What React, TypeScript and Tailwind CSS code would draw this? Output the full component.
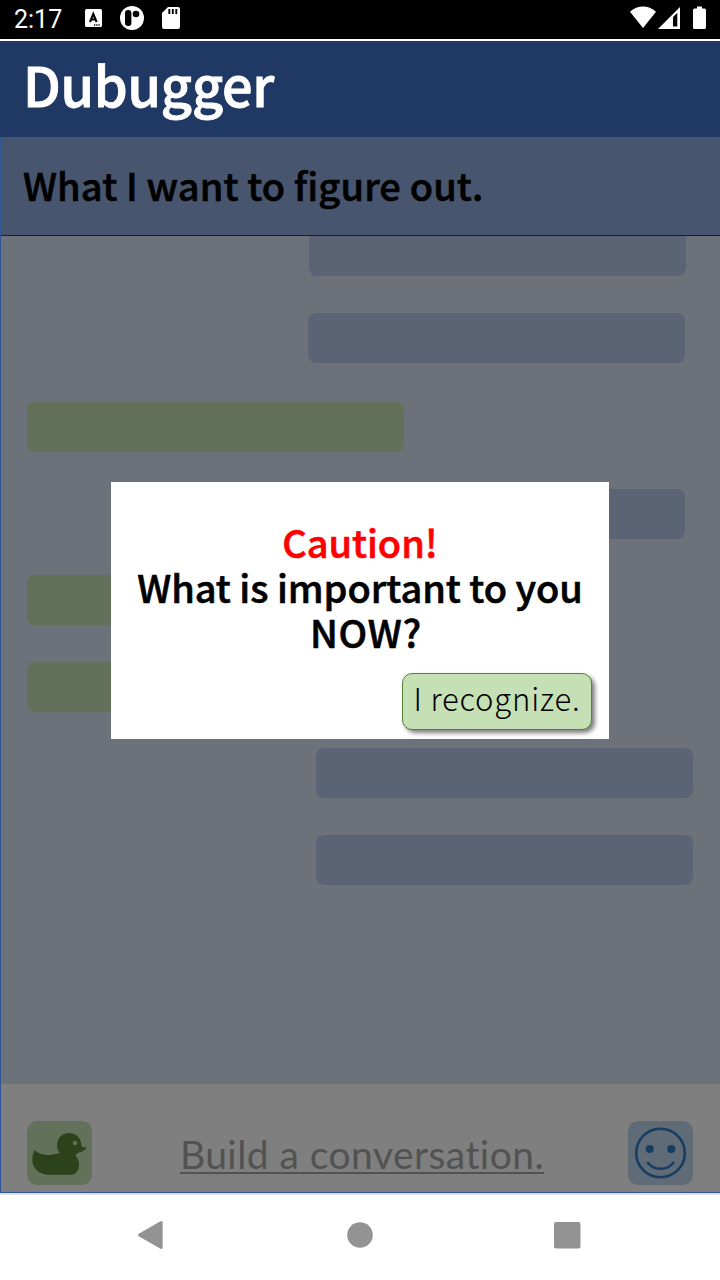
const jp = "font-['Noto_Sans_CJK_JP',sans-serif]";

const bubbles = [
  'ml-[308px] -mt-2.5 bg-[#5a6474]',
  'ml-[307px] mt-[37px] bg-[#5a6474]',
  'ml-[26px] mt-[39px] bg-[#63705a]',
  'ml-[307px] mt-[37px] bg-[#5a6474]',
  'ml-[26px] mt-[36px] bg-[#63705a]',
  'ml-[26px] mt-[37px] bg-[#63705a]',
  'ml-[315px] mt-[36px] bg-[#5a6474]',
  'ml-[315px] mt-[37px] bg-[#5a6474]',
];

function StatusBar() {
  return (
    <div className="flex h-[39px] shrink-0 items-center bg-black text-white">
      <span className="ml-3.5 w-[70px] font-['Roboto',sans-serif] text-[25px] leading-[37px]">2:17</span>
      <svg className="h-[39px] w-[100px]" viewBox="84 0 100 39" fill="white">
        <rect x="85" y="9" width="17" height="18" rx="1.5" />
        <path d="M90 22 L93.3 14 L96.6 22 M91.3 19.5 H95.3" stroke="black" strokeWidth="2.1" fill="none" />
        <path d="M94 25h1.3M96.2 25h1.3M98.4 25h1.3" stroke="black" strokeWidth="1.3" />
        <circle cx="132" cy="18" r="12" />
        <rect x="125" y="10" width="6.4" height="16" rx="3" fill="black" />
        <circle cx="136" cy="14" r="3.3" fill="black" />
        <path d="M168 7h10a2 2 0 0 1 2 2v18a2 2 0 0 1-2 2h-14a2 2 0 0 1-2-2V13z" />
        <path d="M169.3 9v5M172.8 9v5M176.3 9v5" stroke="black" strokeWidth="1.9" />
      </svg>
      <svg className="ml-auto h-[39px] w-[92px]" viewBox="628 0 92 39" fill="white">
        <path d="M630 11.8C637.5 4.7 648.5 4.7 656 11.8L643 28z" />
        <path fillRule="evenodd" d="M680 7v22h-22zM673 17v9.5h4.3V12.8z" />
        <path d="M697 6.5h5v2h2.5a1.5 1.5 0 0 1 1.5 1.5v17.5a1.5 1.5 0 0 1-1.5 1.5h-10a1.5 1.5 0 0 1-1.5-1.5V10a1.5 1.5 0 0 1 1.5-1.5h2.5z" />
      </svg>
    </div>
  );
}

function DuckIcon() {
  return (
    <svg className="size-full" viewBox="0 0 65 64">
      <path
        fill="#2b421b"
        d="M7.5 29.3C11 32.5 17 34.5 23 34C27 33.7 30 32.8 32.8 31.8C30.8 29.8 30 27 30 24.2C30 17.3 35.2 12 42 12C48.5 12 53.5 16.5 54.3 23C54.5 25 54.5 26 55.4 26.2L59.5 26.2C58.5 29.5 54 31.3 51 31.8C50 32.5 49 33.4 48.3 34.5C51 37 52 40 52 43.5C52 49 49.5 53.5 44 53.8H22C12 53.8 5.5 47 5.3 39C5.3 35 6.2 32 7.5 29.3Z"
      />
      <circle cx="48" cy="22" r="2.2" fill="#63705a" />
    </svg>
  );
}

function SmileIcon() {
  return (
    <svg className="size-full" viewBox="0 0 65 64" fill="none" stroke="#183d61">
      <circle cx="32.5" cy="32" r="24.3" strokeWidth="2.6" />
      <circle cx="21.7" cy="28" r="4.1" fill="#183d61" stroke="none" />
      <circle cx="43.3" cy="28" r="4.1" fill="#183d61" stroke="none" />
      <path d="M20 42C26 49.6 39 49.6 45.2 42" strokeWidth="2.6" strokeLinecap="round" />
    </svg>
  );
}

function Caution() {
  return (
    <div className={`${jp} absolute top-[482px] left-[111px] flex h-[257px] w-[498px] flex-col bg-white pt-[37px]`}>
      <div className="text-center text-[38px] leading-[45px] font-medium tracking-[-0.05px] whitespace-nowrap text-black [-webkit-text-stroke:0.6px_currentColor]">
        <p className="text-[#ff0000]">Caution!</p>
        <p>What is important to you</p>
        <p className="pl-3 tracking-[0.8px]">NOW?</p>
      </div>
      <button className="mt-[19px] mr-[17px] flex h-[57px] w-[190px] items-center justify-center self-end rounded-[10px] border border-[#548235] bg-[#c5e0b4] pb-2 text-[31px] leading-none font-light tracking-[0.8px] whitespace-nowrap text-black shadow-[3px_3px_4px_rgba(0,0,0,0.5)]">
        I recognize.
      </button>
    </div>
  );
}

export default function App() {
  return (
    <div className="relative flex h-[1280px] w-[720px] flex-col overflow-hidden bg-white">
      <StatusBar />
      <header className="mt-0.5 flex h-24 shrink-0 items-start bg-[#203864] pl-[23px]">
        <h1 className={`${jp} text-[54px] leading-[86px] font-medium tracking-[-0.2px] text-white [-webkit-text-stroke:0.9px_currentColor]`}>Dubugger</h1>
      </header>
      <main className="flex h-[1056px] shrink-0 flex-col border-y border-l border-[#2f5597]">
        <h2 className={`${jp} h-[98px] shrink-0 border-b border-[#172033] bg-[#48556e] pl-[22px] text-[38px] leading-[94px] font-medium tracking-[0.12px] whitespace-nowrap text-black [-webkit-text-stroke:0.6px_currentColor]`}>
          What I want to figure out.
        </h2>
        <section className="flex h-[848px] shrink-0 flex-col overflow-hidden bg-[#6d727a]">
          {bubbles.map((style, i) => (
            <div key={i} className={`h-[50px] w-[377px] shrink-0 rounded-lg ${style}`} />
          ))}
        </section>
        <footer className="flex flex-1 items-start justify-between bg-[#7f7f7f] pt-[37px] pr-[27px] pl-[26px]">
          <button className="h-16 w-[65px] rounded-[10px] bg-[#63705a]"><DuckIcon /></button>
          <span className="mt-[9px] ml-1 font-['Lato',sans-serif] text-[39px] leading-[48px] tracking-[0.45px] whitespace-nowrap text-[#525252] underline decoration-2 underline-offset-[3px]">
            Build a conversation.
          </span>
          <button className="h-16 w-[65px] rounded-[10px] bg-[#5f6c77]"><SmileIcon /></button>
        </footer>
      </main>
      <nav className="flex flex-1 items-center border-t-2 border-[#dedede]">
        <svg className="h-[85px] w-[720px]" viewBox="0 1195 720 85" fill="#939393">
          <path d="M161.2 1222.5L139.5 1235L161.2 1247.5z" stroke="#939393" strokeWidth="3" strokeLinejoin="round" />
          <circle cx="360" cy="1235" r="12.8" />
          <rect x="554" y="1222" width="26.5" height="26.5" rx="2" />
        </svg>
      </nav>
      <Caution />
    </div>
  );
}
